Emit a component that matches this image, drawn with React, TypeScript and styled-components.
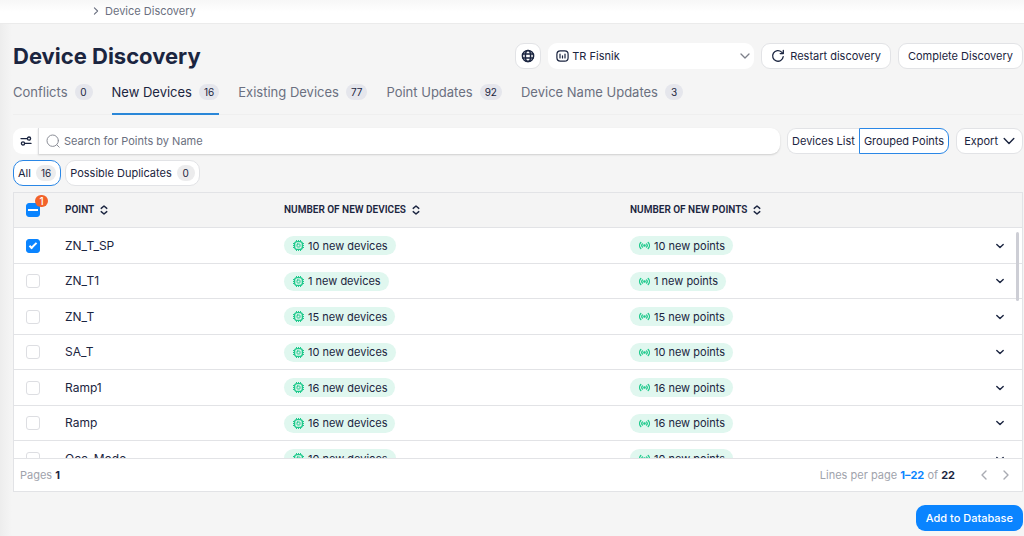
import React, { useEffect, useRef, useState } from "react";
import styled, { createGlobalStyle, css } from "styled-components";

const ink = "#1b2540";
const muted = "#6b7080";
const blue = "#0a84ff";
const line = "#e2e3e6";

const GlobalStyle = createGlobalStyle`
  *, *::before, *::after { box-sizing: border-box; }
  body {
    margin: 0;
    background: #f5f5f5;
    color: ${ink};
    font-family: Inter, "Open Sans", sans-serif;
    font-size: 11px;
    line-height: 16px;
  }
  button, input, select { font: inherit; color: inherit; margin: 0; }
  button { cursor: pointer; }
`;

const Page = styled.div`
  display: flex;
  flex-direction: column;
  height: 100vh;
  min-height: 420px;
  background: linear-gradient(to right, #ededed, #f5f5f5 12px);
`;

const TopBar = styled.header`
  flex: none;
  height: 24px;
  padding: 0 0 2px 92px;
  display: flex;
  align-items: center;
  background: linear-gradient(#f7f7f7, #fff 12px);
  border-bottom: 1px solid #ebebeb;
`;

const Crumb = styled.a`
  display: flex;
  align-items: center;
  gap: 5px;
  color: ${muted};
  text-decoration: none;
`;

const Main = styled.main`
  flex: 1;
  min-height: 0;
  display: flex;
  flex-direction: column;
  padding: 19px 1px 5px 13px;
`;

const TitleRow = styled.div`
  display: flex;
  align-items: center;
  gap: 7px;
`;

const Title = styled.h1`
  flex: 1;
  margin: 0;
  font-size: 22px;
  line-height: 26px;
  font-weight: 700;
`;

const Button = styled.button<{ $square?: boolean; $pad?: number }>`
  flex: none;
  display: flex;
  align-items: center;
  justify-content: center;
  gap: 5px;
  height: 26px;
  width: ${(p) => (p.$square ? "26px" : "auto")};
  padding: 0 ${(p) => (p.$square ? 0 : p.$pad ?? 9)}px;
  border: 1px solid ${line};
  border-radius: 9px;
  background: #fff;
  white-space: nowrap;
`;

const SelectWrap = styled.label`
  position: relative;
  flex: none;
  width: 206px;
  height: 26px;
  & > svg { position: absolute; top: 7px; pointer-events: none; }
  & > svg:first-child { left: 8px; }
  & > svg:last-child { top: 8px; right: 4px; color: #7d808a; }
`;

const Select = styled.select`
  appearance: none;
  width: 100%;
  height: 26px;
  padding: 0 20px 0 24px;
  border: 0;
  border-radius: 9px;
  background: #fff;
`;

const Tabs = styled.nav`
  display: flex;
  gap: 19px;
  margin-top: 10px;
  border-bottom: 1px solid #efefef;
`;

const Tab = styled.button<{ $active?: boolean }>`
  display: flex;
  align-items: center;
  gap: 7px;
  height: 36px;
  margin-bottom: -1px;
  padding: 0 0 8px;
  border: 0;
  border-bottom: 2px solid ${(p) => (p.$active ? "#2a87d8" : "transparent")};
  background: none;
  color: ${(p) => (p.$active ? ink : muted)};
  font-size: 13px;
  white-space: nowrap;
`;

const Count = styled.span<{ $grey?: boolean }>`
  min-width: 18px;
  padding: 0 5px;
  border-radius: 8px;
  background: ${(p) => (p.$grey ? "#ececed" : "#e5e6ec")};
  color: ${ink};
  font-size: 10px;
  line-height: 16px;
  text-align: center;
`;

const Toolbar = styled.div`
  display: flex;
  gap: 7px;
  margin-top: 13px;
`;

const SearchGroup = styled.div`
  flex: 1;
  display: flex;
`;

const FilterButton = styled.button`
  flex: none;
  display: grid;
  place-items: center;
  width: 25px;
  height: 26px;
  padding: 0;
  border: 0;
  border-radius: 9px 0 0 9px;
  background: #fff;
`;

const SearchBox = styled.label`
  flex: 1;
  display: flex;
  align-items: center;
  gap: 4px;
  height: 26px;
  padding: 0 7px;
  border-left: 1px solid #dcdde0;
  border-radius: 0 9px 9px 0;
  background: #fff;
  box-shadow: 0 1px 2px rgba(0, 0, 0, 0.16);
`;

const SearchInput = styled.input`
  flex: 1;
  min-width: 0;
  padding: 0;
  border: 0;
  outline: 0;
  background: none;
  &::placeholder { color: ${muted}; opacity: 1; }
`;

const Segments = styled.div`
  flex: none;
  display: flex;
`;

const Segment = styled.button<{ $active?: boolean }>`
  height: 26px;
  padding: 0 4px;
  border: 1px solid ${line};
  border-right: 0;
  border-radius: 9px 0 0 9px;
  background: #fff;
  white-space: nowrap;
  ${(p) => p.$active && css`
    border: 1px solid #2a87e6;
    border-radius: 0 9px 9px 0;
  `}
`;

const Chips = styled.div`
  display: flex;
  gap: 4px;
  margin: 6px 0;
`;

const Chip = styled.button<{ $active?: boolean }>`
  display: flex;
  align-items: center;
  gap: 5px;
  height: 26px;
  padding: 0 4px;
  border: 1px solid ${(p) => (p.$active ? "#2a87e6" : line)};
  border-radius: 10px;
  background: #fff;
`;

const Panel = styled.section`
  position: relative;
  flex: 1;
  min-height: 0;
  display: flex;
  flex-direction: column;
  border: 1px solid ${line};
  background: #fff;
`;

const Scroller = styled.div`
  flex: 1;
  min-height: 0;
  overflow-y: auto;
  scrollbar-width: none;
`;

const ScrollThumb = styled.div`
  position: absolute;
  top: 39px;
  right: 3px;
  width: 3px;
  height: 69px;
  border-radius: 2px;
  background: #cdced5;
`;

const Table = styled.table`
  width: 100%;
  table-layout: fixed;
  border-collapse: separate;
  border-spacing: 0;
`;

const Head = styled.th<{ $width?: number }>`
  position: sticky;
  top: 0;
  z-index: 1;
  width: ${(p) => (p.$width ? `${p.$width}px` : "auto")};
  height: 35px;
  padding: 0;
  border-bottom: 1px solid ${line};
  background: #f4f4f4;
  text-align: left;
`;

const SortButton = styled.button`
  display: flex;
  align-items: center;
  gap: 6px;
  padding: 0;
  border: 0;
  background: none;
  font-family: Roboto, Inter, sans-serif;
  font-size: 10px;
  font-weight: 600;
`;

const Row = styled.tr`
  height: 36px;
  &:nth-child(even) { height: 35px; }
`;

const Cell = styled.td`
  padding: 0;
  border-bottom: 1px solid ${line};
`;

const PointName = styled.span`
  font-size: 12px;
`;

const CheckWrap = styled.div`
  position: relative;
  display: flex;
  width: 14px;
  margin-left: 12px;
`;

const Checkbox = styled.input`
  appearance: none;
  position: relative;
  width: 14px;
  height: 14px;
  border: 1px solid #dddee2;
  border-radius: 3px;
  background: #fff;
  &:checked, &:indeterminate { background: ${blue}; border-color: ${blue}; }
  &:checked::after {
    content: "";
    position: absolute;
    left: 4px;
    top: 1px;
    width: 4px;
    height: 8px;
    border: solid #fff;
    border-width: 0 2px 2px 0;
    transform: rotate(45deg);
  }
  &:indeterminate::after {
    content: "";
    position: absolute;
    left: 1px;
    top: 5px;
    width: 10px;
    height: 2px;
    background: #fff;
  }
`;

const CheckBadge = styled.span`
  position: absolute;
  left: 9px;
  top: -8px;
  width: 13px;
  height: 12px;
  border-radius: 6px;
  background: #f2622a;
  color: #fff;
  font-size: 10px;
  font-weight: 500;
  line-height: 12px;
  text-align: center;
`;

const Pill = styled.span`
  display: inline-flex;
  align-items: center;
  gap: 4px;
  height: 19px;
  padding: 0 8px 0 9px;
  border-radius: 10px;
  background: #e0f7ef;
  vertical-align: middle;
`;

const Expand = styled.button`
  display: flex;
  margin-left: auto;
  margin-right: 18px;
  padding: 0;
  border: 0;
  background: none;
`;

const Footer = styled.footer`
  flex: none;
  display: flex;
  align-items: center;
  justify-content: space-between;
  height: 33px;
  padding: 0 11px 0 6px;
  border-top: 1px solid ${line};
  color: #a0a3ac;
  b { color: ${ink}; font-weight: 700; }
  em { color: ${blue}; font-style: normal; font-weight: 700; }
`;

const Pager = styled.div`
  display: flex;
  align-items: center;
`;

const PageButton = styled.button`
  display: flex;
  margin-left: 12px;
  padding: 0;
  border: 0;
  background: none;
  color: #a9abb2;
  &:first-of-type { margin-left: 24px; }
`;

const Actions = styled.div`
  display: flex;
  justify-content: flex-end;
  margin-top: 13px;
`;

const Primary = styled.button`
  height: 26px;
  padding: 0 10px;
  border: 0;
  border-radius: 9px;
  background: ${blue};
  color: #fff;
  font-weight: 500;
`;

const stroke = {
  fill: "none",
  stroke: "currentColor",
  strokeLinecap: "round" as const,
  strokeLinejoin: "round" as const,
};

const Chevron = ({ dir, size = 8, weight = 1.4 }: { dir: "down" | "left" | "right"; size?: number; weight?: number }) => {
  const d = { down: "M1 3l4 4 4-4", left: "M7 1L3 5l4 4", right: "M3 1l4 4-4 4" }[dir];
  return (
    <svg width={size} height={size} viewBox="0 0 10 10" {...stroke} strokeWidth={weight}>
      <path d={d} />
    </svg>
  );
};

const Globe = () => (
  <svg width="14" height="14" viewBox="0 0 14 14" {...stroke} strokeWidth="1.5">
    <circle cx="7" cy="7" r="5.6" />
    <ellipse cx="7" cy="7" rx="2.6" ry="5.6" />
    <path d="M1.8 5.1h10.4M1.8 8.9h10.4" />
  </svg>
);

const SiteIcon = () => (
  <svg width="13" height="12" viewBox="0 0 13 12" {...stroke} strokeWidth="1.2">
    <rect x="0.9" y="0.8" width="11.2" height="10.4" rx="3.4" />
    <path d="M4 4v4M6.5 5.8V8M9 4v4" />
  </svg>
);

const Restart = () => (
  <svg width="14" height="14" viewBox="0 0 14 14" {...stroke} strokeWidth="1.3">
    <path d="M12.2 7.6A5.3 5.3 0 1 1 10.6 3.1L12 4.4" />
    <path d="M12.3 1.5v3.1H9.2" />
  </svg>
);

const Sliders = () => (
  <svg width="12" height="10" viewBox="0 0 12 10" {...stroke} strokeWidth="1.3">
    <path d="M1 2.6h6M5 7.4h6" />
    <circle cx="9" cy="2.6" r="1.6" />
    <circle cx="3" cy="7.4" r="1.6" />
  </svg>
);

const SearchIcon = () => (
  <svg width="14" height="14" viewBox="0 0 14 14" {...stroke} stroke="#8b8e97" strokeWidth="1">
    <circle cx="6.7" cy="6.7" r="5.7" />
    <path d="M10.8 10.8l2.4 2.4" />
  </svg>
);

const SortIcon = () => (
  <svg width="8" height="10" viewBox="0 0 8 10" {...stroke} strokeWidth="1.4">
    <path d="M1.2 3.4L4 1l2.8 2.4M1.2 6.6L4 9l2.8-2.4" />
  </svg>
);

const ChipIcon = () => (
  <svg width="11" height="11" viewBox="0 0 11 11" {...stroke} stroke="#1fc98c">
    <rect x="1.6" y="1.6" width="7.8" height="7.8" rx="2.4" strokeWidth="1.4" />
    <rect x="4" y="4" width="3" height="3" rx="0.6" strokeWidth="1" />
    <path strokeWidth="1" strokeLinecap="butt" d="M3.5 0v1.4M5.5 0v1.4M7.5 0v1.4M3.5 9.6V11M5.5 9.6V11M7.5 9.6V11M0 3.5h1.4M0 5.5h1.4M0 7.5h1.4M9.6 3.5H11M9.6 5.5H11M9.6 7.5H11" />
  </svg>
);

const SignalIcon = () => (
  <svg width="11" height="11" viewBox="0 0 11 11" {...stroke} stroke="#1fc98c" strokeWidth="1.3">
    <circle cx="5.5" cy="5.5" r="0.7" fill="#1fc98c" />
    <path d="M3.5 3.9a2.3 2.3 0 0 0 0 3.2M7.5 3.9a2.3 2.3 0 0 1 0 3.2M1.8 2.5a4.3 4.3 0 0 0 0 6M9.2 2.5a4.3 4.3 0 0 1 0 6" />
  </svg>
);

const tabs = [
  { label: "Conflicts", count: 0 },
  { label: "New Devices", count: 16 },
  { label: "Existing Devices", count: 77 },
  { label: "Point Updates", count: 92 },
  { label: "Device Name Updates", count: 3 },
];

const points = [
  { name: "ZN_T_SP", count: 10 },
  { name: "ZN_T1", count: 1 },
  { name: "ZN_T", count: 15 },
  { name: "SA_T", count: 10 },
  { name: "Ramp1", count: 16 },
  { name: "Ramp", count: 16 },
  { name: "Occ_Mode", count: 10 },
];

export default function App() {
  const [tab, setTab] = useState(1);
  const [selected, setSelected] = useState<string[]>(["ZN_T_SP"]);
  const allRef = useRef<HTMLInputElement>(null);
  const all = selected.length === points.length;

  useEffect(() => {
    if (allRef.current) allRef.current.indeterminate = selected.length > 0 && !all;
  }, [selected, all]);

  const toggle = (name: string) =>
    setSelected((s) => (s.includes(name) ? s.filter((n) => n !== name) : [...s, name]));

  return (
    <>
      <GlobalStyle />
      <Page>
        <TopBar>
          <Crumb href="#discovery">
            <Chevron dir="right" size={8} />
            Device Discovery
          </Crumb>
        </TopBar>
        <Main>
          <TitleRow>
            <Title>Device Discovery</Title>
            <Button $square aria-label="Language"><Globe /></Button>
            <SelectWrap>
              <SiteIcon />
              <Select defaultValue="TR Fisnik" aria-label="Site"><option>TR Fisnik</option></Select>
              <Chevron dir="down" size={10} weight={1.3} />
            </SelectWrap>
            <Button><Restart />Restart discovery</Button>
            <Button>Complete Discovery</Button>
          </TitleRow>
          <Tabs>
            {tabs.map((t, i) => (
              <Tab key={t.label} $active={i === tab} onClick={() => setTab(i)}>
                {t.label}
                <Count>{t.count}</Count>
              </Tab>
            ))}
          </Tabs>
          <Toolbar>
            <SearchGroup>
              <FilterButton aria-label="Filters"><Sliders /></FilterButton>
              <SearchBox>
                <SearchIcon />
                <SearchInput aria-label="Search" placeholder="Search for Points by Name" />
              </SearchBox>
            </SearchGroup>
            <Segments>
              <Segment>Devices List</Segment>
              <Segment $active>Grouped Points</Segment>
            </Segments>
            <Button $pad={7}>Export<Chevron dir="down" size={12} weight={1.2} /></Button>
          </Toolbar>
          <Chips>
            <Chip $active>All<Count $grey>16</Count></Chip>
            <Chip>Possible Duplicates<Count $grey>0</Count></Chip>
          </Chips>
          <Panel>
            <Scroller>
              <Table>
                <thead>
                  <tr>
                    <Head $width={51}>
                      <CheckWrap>
                        <Checkbox
                          ref={allRef}
                          type="checkbox"
                          aria-label="Select all points"
                          checked={all}
                          onChange={() => setSelected(all ? [] : points.map((p) => p.name))}
                        />
                        {selected.length > 0 && <CheckBadge>{selected.length}</CheckBadge>}
                      </CheckWrap>
                    </Head>
                    <Head $width={219}><SortButton>POINT<SortIcon /></SortButton></Head>
                    <Head $width={346}><SortButton>NUMBER OF NEW DEVICES<SortIcon /></SortButton></Head>
                    <Head><SortButton>NUMBER OF NEW POINTS<SortIcon /></SortButton></Head>
                    <Head $width={60} aria-label="Expand" />
                  </tr>
                </thead>
                <tbody>
                  {points.map((p) => (
                    <Row key={p.name}>
                      <Cell>
                        <CheckWrap>
                          <Checkbox
                            type="checkbox"
                            aria-label={p.name}
                            checked={selected.includes(p.name)}
                            onChange={() => toggle(p.name)}
                          />
                        </CheckWrap>
                      </Cell>
                      <Cell><PointName>{p.name}</PointName></Cell>
                      <Cell><Pill><ChipIcon />{`${p.count} new devices`}</Pill></Cell>
                      <Cell><Pill><SignalIcon />{`${p.count} new points`}</Pill></Cell>
                      <Cell><Expand aria-label={`Expand ${p.name}`}><Chevron dir="down" size={8} weight={1.7} /></Expand></Cell>
                    </Row>
                  ))}
                </tbody>
              </Table>
            </Scroller>
            <ScrollThumb />
            <Footer>
              <span>Pages <b>1</b></span>
              <Pager>
                <span>Lines per page <em>1–22</em> of <b>22</b></span>
                <PageButton aria-label="Previous page"><Chevron dir="left" size={10} /></PageButton>
                <PageButton aria-label="Next page"><Chevron dir="right" size={10} /></PageButton>
              </Pager>
            </Footer>
          </Panel>
          <Actions>
            <Primary>Add to Database</Primary>
          </Actions>
        </Main>
      </Page>
    </>
  );
}
